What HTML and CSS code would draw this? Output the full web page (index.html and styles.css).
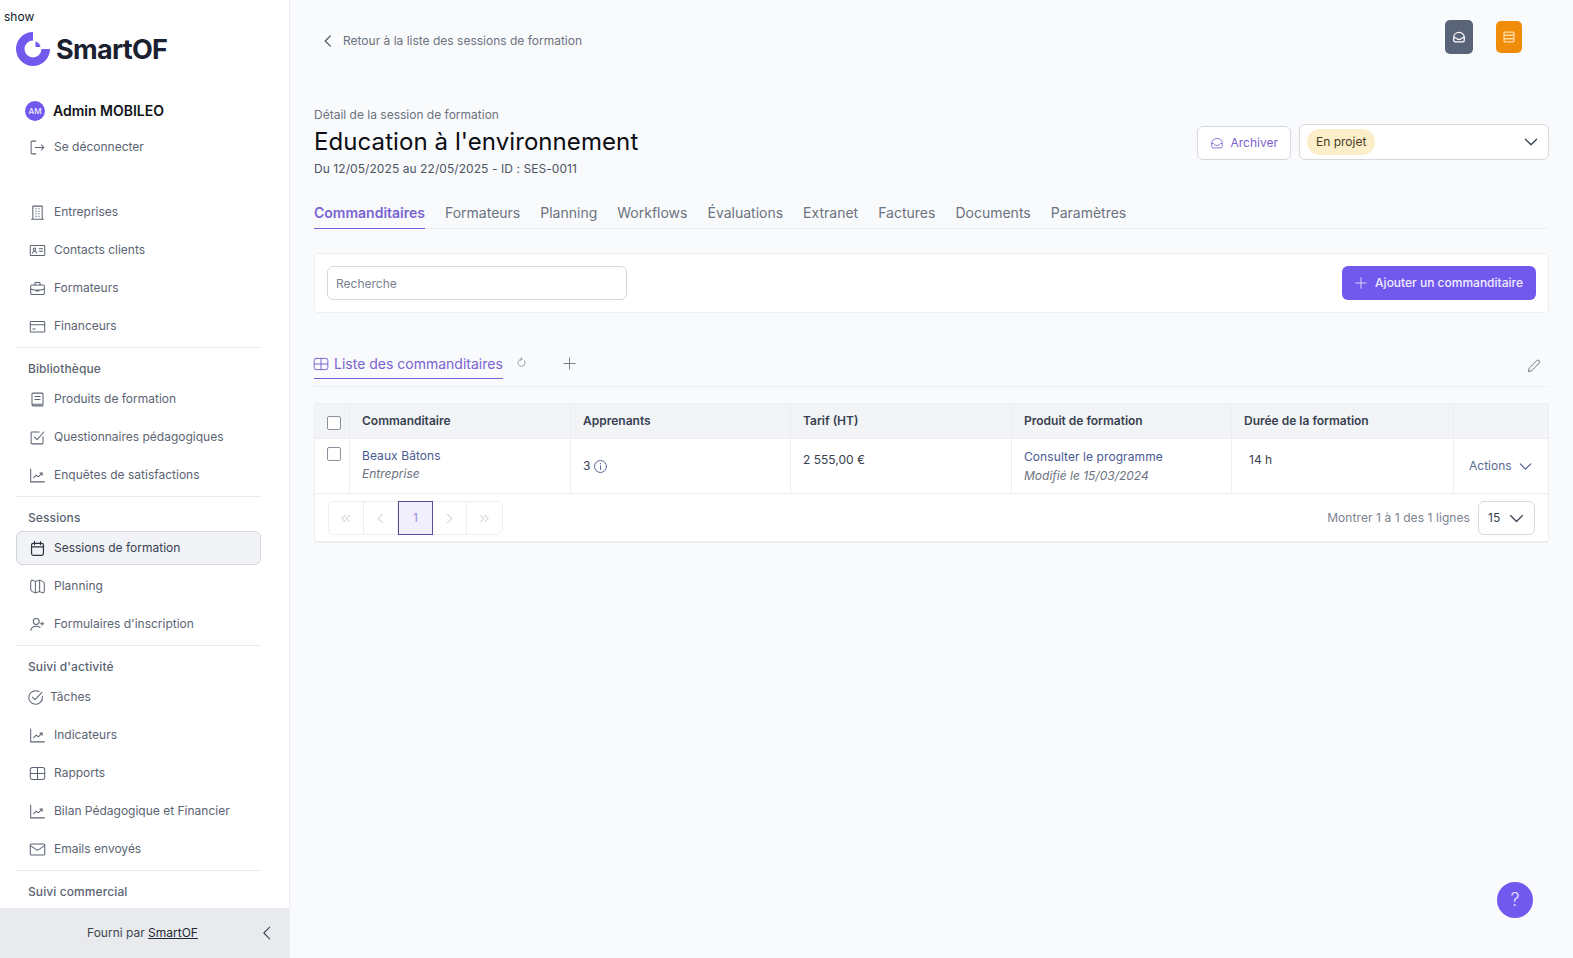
FILE: index.html
```html
<!DOCTYPE html>
<html lang="fr">
<head>
<meta charset="utf-8">
<title>Education à l'environnement</title>
<link rel="stylesheet" href="styles.css">
</head>
<body>
<svg class="sprite" aria-hidden="true">
  <symbol id="i-logout" viewBox="0 0 20 20"><path d="M8 2.500H3.500a1 1 0 0 0-1 1v13a1 1 0 0 0 1 1H8M7.500 10h10M14.500 7l3 3-3 3"/></symbol>
  <symbol id="i-building" viewBox="0 0 20 20"><path d="M4.500 18V2.500h11V18M3 18h14M8 5.500h.5M11.500 5.500h.5M8 8.500h.5M11.500 8.500h.5M8 11.500h.5M11.500 11.500h.5M8 14.500h.5M11.500 14.500h.5"/></symbol>
  <symbol id="i-id" viewBox="0 0 20 20"><rect x="1.500" y="4" width="17" height="12" rx="1"/><circle cx="6.500" cy="8.500" r="1.500"/><path d="M4 13c.5-1.500 1.500-2 2.500-2s2 .5 2.500 2M12 8h4M12 11h4"/></symbol>
  <symbol id="i-case" viewBox="0 0 20 20"><rect x="2" y="6" width="16" height="11" rx="1.500"/><path d="M7 6V4a1 1 0 0 1 1-1h4a1 1 0 0 1 1 1v2M2 10.500c5 2 11 2 16 0M8.500 11.500v1.500h3v-1.500"/></symbol>
  <symbol id="i-card" viewBox="0 0 20 20"><rect x="1.500" y="4" width="17" height="12.500" rx="1"/><path d="M1.500 8h17M4.500 13h3"/></symbol>
  <symbol id="i-book" viewBox="0 0 20 20"><path d="M3.500 15.500V3.500a1 1 0 0 1 1-1h11a1 1 0 0 1 1 1v12zM3.500 15.500a2 2 0 0 0 2 2h11M7 6.500h6M7 10h6"/></symbol>
  <symbol id="i-check-square" viewBox="0 0 20 20"><path d="M16.500 9v7.500a1 1 0 0 1-1 1h-12a1 1 0 0 1-1-1v-12a1 1 0 0 1 1-1H12M6.500 9.500l3 3 8-9"/></symbol>
  <symbol id="i-chart" viewBox="0 0 20 20"><path d="M2 2.500V17.500h16M5.500 12.500l3-3 2.500 2 4.500-4.500M12.800 7h2.700v2.700"/></symbol>
  <symbol id="i-calendar" viewBox="0 0 20 20"><rect x="3" y="4" width="14" height="14" rx="2"/><path d="M3 8h14M6.500 2v3.500M13.500 2v3.500"/></symbol>
  <symbol id="i-map" viewBox="0 0 20 20"><path d="M2 5c0-1.500 1-2.500 2-2.500L7.500 4l5-1.500L16 4c1 .5 2 1 2 2.500V15c0 1.500-1 2.500-2 2.500L12.500 16l-5 1.500L4 16c-1-.5-2-1-2-2.500zM7.500 4v13.500M12.500 2.500V16"/></symbol>
  <symbol id="i-user-plus" viewBox="0 0 20 20"><circle cx="8.500" cy="6.500" r="3.500"/><path d="M2 17c.5-3.500 3-5 6.500-5 2 0 3.500.5 4.500 1.500M15.500 7v4M13.500 9h4"/></symbol>
  <symbol id="i-check-circle" viewBox="0 0 20 20"><path d="M18 8.500A8 8 0 1 1 14 3M6.500 9.500l3 3 8-8.500"/></symbol>
  <symbol id="i-table" viewBox="0 0 20 20"><rect x="1.500" y="3" width="17" height="14" rx="2.500"/><path d="M1.500 10h17M10 3v14"/></symbol>
  <symbol id="i-mail" viewBox="0 0 20 20"><rect x="1.500" y="3.500" width="17" height="13" rx="1.200"/><path d="M1.500 5.500L10 11l8.500-5.500"/></symbol>
  <symbol id="i-inbox" viewBox="0 0 20 20"><path d="M2.500 10.500V15a2 2 0 0 0 2 2h11a2 2 0 0 0 2-2v-4.500c0-4-3-7-7.500-7s-7.500 3-7.500 7zM2.500 10.500c2.500 0 3.500.5 4.500 2l1.500 1h3l1.500-1c1-1.500 2-2 4.500-2"/></symbol>
  <symbol id="i-stack" viewBox="0 0 20 20"><rect x="3" y="3" width="14" height="14" rx="1"/><path d="M3 7.500h14M3 12.500h14"/></symbol>
  <symbol id="i-left" viewBox="0 0 20 20"><path d="M13 3.500L6.500 10l6.500 6.500"/></symbol>
  <symbol id="i-right" viewBox="0 0 20 20"><path d="M7 3.500l6.500 6.500L7 16.500"/></symbol>
  <symbol id="i-first" viewBox="0 0 20 20"><path d="M9.500 5l-5 5 5 5M16 5l-5 5 5 5"/></symbol>
  <symbol id="i-last" viewBox="0 0 20 20"><path d="M4 5l5 5-5 5M10.500 5l5 5-5 5"/></symbol>
  <symbol id="i-down" viewBox="0 0 20 20"><path d="M3 6.500l7 7 7-7"/></symbol>
  <symbol id="i-plus" viewBox="0 0 20 20"><path d="M10 2.500v15M2.500 10h15"/></symbol>
  <symbol id="i-pencil" viewBox="0 0 20 20"><path d="M13.500 3.200a2 2 0 0 1 3 3L7 16l-4 1 1-4z"/></symbol>
  <symbol id="i-refresh" viewBox="0 0 20 20"><path d="M15.500 7a6.500 6.500 0 1 1-5.500-3M9 1l2.500 3-3 2"/></symbol>
  <symbol id="i-info" viewBox="0 0 20 20"><circle cx="10" cy="10" r="8"/><path d="M10 9v5M10 6v.5"/></symbol>
</svg>

<div class="app">
  <aside class="sidebar">
    <div class="sidebar-top">
      <div class="show">show</div>
      <div class="logo">
        <svg class="logo-mark" viewBox="0 0 34 34"><path class="logo-fill" d="M17 0v8.500a8.500 8.500 0 1 0 8.500 8.500H34A17 17 0 1 1 17 0z"/><path class="logo-fill" d="M19.500 9.500a7 7 0 0 1 5 5.500h-5z"/></svg>
        <span class="logo-text">SmartOF</span>
      </div>
      <div class="user"><span class="avatar">AM</span><span class="user-name">Admin MOBILEO</span></div>
      <a class="nav-item logout"><svg class="ico"><use href="#i-logout"/></svg>Se déconnecter</a>
    </div>
    <nav class="nav">
      <a class="nav-item"><svg class="ico"><use href="#i-building"/></svg>Entreprises</a>
      <a class="nav-item"><svg class="ico"><use href="#i-id"/></svg>Contacts clients</a>
      <a class="nav-item"><svg class="ico"><use href="#i-case"/></svg>Formateurs</a>
      <a class="nav-item"><svg class="ico"><use href="#i-card"/></svg>Financeurs</a>
      <div class="nav-section">Bibliothèque</div>
      <a class="nav-item"><svg class="ico"><use href="#i-book"/></svg>Produits de formation</a>
      <a class="nav-item"><svg class="ico"><use href="#i-check-square"/></svg>Questionnaires pédagogiques</a>
      <a class="nav-item"><svg class="ico"><use href="#i-chart"/></svg>Enquêtes de satisfactions</a>
      <div class="nav-section">Sessions</div>
      <a class="nav-item active"><svg class="ico"><use href="#i-calendar"/></svg>Sessions de formation</a>
      <a class="nav-item"><svg class="ico"><use href="#i-map"/></svg>Planning</a>
      <a class="nav-item"><svg class="ico"><use href="#i-user-plus"/></svg>Formulaires d'inscription</a>
      <div class="nav-section">Suivi d'activité</div>
      <a class="nav-item tight"><svg class="ico"><use href="#i-check-circle"/></svg>Tâches</a>
      <a class="nav-item"><svg class="ico"><use href="#i-chart"/></svg>Indicateurs</a>
      <a class="nav-item"><svg class="ico"><use href="#i-table"/></svg>Rapports</a>
      <a class="nav-item"><svg class="ico"><use href="#i-chart"/></svg>Bilan Pédagogique et Financier</a>
      <a class="nav-item"><svg class="ico"><use href="#i-mail"/></svg>Emails envoyés</a>
      <div class="nav-section">Suivi commercial</div>
    </nav>
    <div class="side-foot">
      <span>Fourni par <a class="foot-link">SmartOF</a></span>
      <svg class="ico foot-chevron"><use href="#i-left"/></svg>
    </div>
  </aside>

  <main class="main">
    <div class="topbar">
      <a class="back"><svg class="ico back-ico"><use href="#i-left"/></svg>Retour à la liste des sessions de formation</a>
      <div class="top-actions">
        <span class="square slate"><svg class="ico"><use href="#i-inbox"/></svg></span>
        <span class="square orange"><svg class="ico"><use href="#i-stack"/></svg></span>
      </div>
    </div>

    <div class="head">
      <div>
        <div class="eyebrow">Détail de la session de formation</div>
        <h1 class="title">Education à l'environnement</h1>
        <div class="subtitle">Du 12/05/2025 au 22/05/2025 - ID : SES-0011</div>
      </div>
      <div class="head-actions">
        <button class="btn-archive"><svg class="ico"><use href="#i-inbox"/></svg>Archiver</button>
        <div class="status-select"><span class="badge">En projet</span><svg class="ico status-chevron"><use href="#i-down"/></svg></div>
      </div>
    </div>

    <div class="tabs">
      <a class="tab active">Commanditaires</a>
      <a class="tab">Formateurs</a>
      <a class="tab">Planning</a>
      <a class="tab">Workflows</a>
      <a class="tab">Évaluations</a>
      <a class="tab">Extranet</a>
      <a class="tab">Factures</a>
      <a class="tab">Documents</a>
      <a class="tab">Paramètres</a>
    </div>

    <div class="search-card">
      <div class="search-input">Recherche</div>
      <button class="btn-add"><svg class="ico"><use href="#i-plus"/></svg>Ajouter un commanditaire</button>
    </div>

    <div class="views">
      <a class="view active"><svg class="ico"><use href="#i-table"/></svg>Liste des commanditaires</a>
      <svg class="ico refresh"><use href="#i-refresh"/></svg>
      <svg class="ico add-view"><use href="#i-plus"/></svg>
      <svg class="ico edit-view"><use href="#i-pencil"/></svg>
    </div>

    <div class="table">
      <div class="row row-head">
        <div class="cell cell-check"><span class="checkbox"></span></div>
        <div class="cell">Commanditaire</div>
        <div class="cell">Apprenants</div>
        <div class="cell">Tarif (HT)</div>
        <div class="cell">Produit de formation</div>
        <div class="cell">Durée de la formation</div>
        <div class="cell"></div>
      </div>
      <div class="row row-body">
        <div class="cell cell-check"><span class="checkbox"></span></div>
        <div class="cell stack">
          <a class="link">Beaux Bâtons</a>
          <em class="muted">Entreprise</em>
        </div>
        <div class="cell low">3<svg class="ico info"><use href="#i-info"/></svg></div>
        <div class="cell mid">2 555,00 €</div>
        <div class="cell stack offset">
          <a class="link">Consulter le programme</a>
          <em class="muted">Modifié le 15/03/2024</em>
        </div>
        <div class="cell mid indent">14 h</div>
        <div class="cell low actions"><span>Actions</span><svg class="ico action-chevron"><use href="#i-down"/></svg></div>
      </div>
      <div class="table-foot">
        <div class="pager">
          <span class="page"><svg class="ico"><use href="#i-first"/></svg></span>
          <span class="page"><svg class="ico"><use href="#i-left"/></svg></span>
          <span class="page current">1</span>
          <span class="page"><svg class="ico"><use href="#i-right"/></svg></span>
          <span class="page"><svg class="ico"><use href="#i-last"/></svg></span>
        </div>
        <div class="page-info">
          <span>Montrer 1 à 1 des 1 lignes</span>
          <div class="page-size">15<svg class="ico"><use href="#i-down"/></svg></div>
        </div>
      </div>
    </div>
  </main>
</div>

<button class="help">?</button>
</body>
</html>
```
FILE: styles.css
```css
* { box-sizing: border-box; }

html, body { height: 100%; }

body {
  margin: 0;
  font-family: Inter, "Liberation Sans", sans-serif;
  font-size: 12px;
  line-height: 18px;
  color: #374151;
  background: #f9fafc;
  overflow: hidden;
}

.sprite { display: none; }

.ico {
  width: 16px;
  height: 16px;
  flex: none;
  fill: none;
  stroke: currentColor;
  stroke-width: 1.2;
  stroke-linecap: round;
  stroke-linejoin: round;
}

.app { display: flex; height: 958px; }

/* Sidebar */
.sidebar {
  width: 290px;
  flex: none;
  display: flex;
  flex-direction: column;
  background: #fff;
  border-right: 1px solid #eceef1;
}

.sidebar-top { padding: 8px 28px 0 0; }

.show { padding-left: 4px; color: #111827; }

.logo {
  display: flex;
  align-items: center;
  gap: 6px;
  height: 34px;
  margin: 6px 0 0 16px;
}

.logo-mark { width: 34px; height: 34px; }
.logo-fill { fill: #7259ee; }

.logo-text {
  padding-top: 2px;
  font-size: 27px;
  font-weight: 700;
  line-height: 34px;
  letter-spacing: -0.7px;
  color: #1a2030;
}

.user {
  display: flex;
  align-items: center;
  gap: 8px;
  height: 24px;
  margin: 33px 0 0 25px;
}

.avatar {
  width: 20px;
  height: 20px;
  border-radius: 50%;
  display: flex;
  align-items: center;
  justify-content: center;
  font-size: 8px;
  font-weight: 500;
  color: #f1eeff;
  background: #7259ee;
}

.user-name {
  font-size: 14px;
  font-weight: 600;
  color: #111318;
}

.nav-item {
  display: flex;
  align-items: center;
  gap: 8px;
  height: 34px;
  margin-left: 16px;
  padding-left: 12px;
  border: 1px solid transparent;
  border-radius: 6px;
  color: #5b6472;
}

.nav-item .ico { width: 17px; height: 17px; }

.logout { margin-top: 7px; }

.nav {
  flex: 1;
  min-height: 0;
  overflow: hidden;
  margin-top: 31px;
  padding-right: 28px;
  display: flex;
  flex-direction: column;
  gap: 4px;
}

.nav-item.active {
  background: #f1f3f6;
  border-color: #d3d6dc;
  color: #374151;
}

.nav-item.active .ico { color: #2b3240; stroke-width: 1.4; }

.nav-item.tight { padding-left: 10px; gap: 6px; }

.nav-section {
  flex: none;
  margin-left: 16px;
  padding: 12px 0 0 12px;
  height: 31px;
  border-top: 1px solid #e8eaed;
  font-weight: 500;
  color: #5b6472;
  letter-spacing: 0.1px;
}

.side-foot {
  flex: none;
  position: relative;
  height: 50px;
  display: flex;
  align-items: center;
  justify-content: center;
  padding-right: 4px;
  background: #e8eaed;
  color: #3f4753;
}

.foot-link { color: #1f2937; text-decoration: underline; }

.foot-chevron {
  position: absolute;
  right: 13px;
  top: 16px;
  width: 18px;
  height: 18px;
}

/* Main */
.main {
  flex: 1;
  min-width: 0;
  padding: 20px 24px 0 24px;
}

.topbar {
  display: flex;
  justify-content: space-between;
  height: 34px;
}

.back {
  display: flex;
  align-items: center;
  gap: 7px;
  height: 18px;
  margin: 12px 0 0 6px;
  color: #6b7280;
}

.back-ico { color: #4b5563; stroke-width: 1.5; }

.top-actions {
  display: flex;
  align-items: center;
  gap: 23px;
  padding-right: 27px;
}

.square {
  display: flex;
  align-items: center;
  justify-content: center;
  border-radius: 5px;
  color: #fff;
}

.square .ico { width: 14px; height: 14px; stroke-width: 1.8; }

.slate { width: 28px; height: 34px; background: #5a6479; }
.orange { width: 26px; height: 32px; background: #f08c0a; color: #fcdca0; }

.head {
  display: flex;
  justify-content: space-between;
  align-items: flex-end;
  margin-top: 52px;
}

.eyebrow { color: #6b7280; }

.title {
  margin: 0;
  font-size: 24px;
  font-weight: 400;
  line-height: 36px;
  letter-spacing: 0.08px;
  color: #0b0d12;
}

.subtitle { color: #4b5563; letter-spacing: 0.07px; }

.head-actions {
  display: flex;
  align-items: flex-end;
  gap: 8px;
  margin-bottom: 18px;
}

.btn-archive {
  display: flex;
  align-items: center;
  gap: 7px;
  height: 34px;
  padding: 0 12px;
  font: inherit;
  color: #7a63d1;
  background: #fff;
  border: 1px solid #d5d8dd;
  border-radius: 6px;
}

.btn-archive .ico { width: 14px; height: 14px; }

.status-select {
  display: flex;
  align-items: center;
  justify-content: space-between;
  width: 250px;
  height: 36px;
  padding: 0 9px 0 7px;
  background: #fff;
  border: 1px solid #d5d8dd;
  border-radius: 6px;
}

.badge {
  padding: 4px 9px;
  border-radius: 13px;
  background: #fbeec9;
  color: #473a1f;
}

.status-chevron { color: #374151; stroke-width: 1.6; }

.tabs {
  display: flex;
  gap: 20px;
  margin-top: 24px;
  border-bottom: 1px solid #eceef1;
}

.tab {
  height: 27px;
  line-height: 22px;
  font-size: 14px;
  color: #6b7280;
  margin-bottom: -1px;
  border-bottom: 1px solid transparent;
}

.tab.active {
  font-weight: 600;
  color: #7a63d1;
  border-bottom-color: #7a63d1;
}

.search-card {
  display: flex;
  justify-content: space-between;
  height: 60px;
  margin-top: 24px;
  padding: 12px;
  background: #fff;
  border: 1px solid #eceef1;
  border-radius: 4px;
}

.search-input {
  width: 300px;
  height: 34px;
  padding: 0 8px;
  line-height: 34px;
  color: #7b8290;
  border: 1px solid #d5d8dd;
  border-radius: 6px;
}

.btn-add {
  display: flex;
  align-items: center;
  gap: 7px;
  height: 34px;
  padding: 0 13px 0 12px;
  font: inherit;
  font-weight: 500;
  color: #f1eeff;
  background: #7259ee;
  border: 0;
  border-radius: 6px;
}

.btn-add .ico { width: 14px; height: 14px; }

.views {
  display: flex;
  align-items: flex-start;
  height: 35px;
  margin-top: 39px;
  border-bottom: 1px solid #eceef1;
}

.view {
  display: flex;
  align-items: center;
  gap: 5px;
  height: 27px;
  padding-bottom: 3px;
  font-size: 14px;
  color: #7a63d1;
  border-bottom: 1px solid #7a63d1;
}

.view .ico { margin-left: -1px; }

.refresh {
  width: 11px;
  height: 11px;
  margin: 5px 0 0 13px;
  color: #6b7280;
}

.add-view {
  width: 15px;
  height: 15px;
  margin: 4px 0 0 35px;
  color: #6b7280;
}

.edit-view {
  width: 16px;
  height: 16px;
  margin: 6px 7px 0 auto;
  color: #6b7280;
}

.table {
  margin-top: 16px;
  background: #fff;
  border: 1px solid #eceef1;
  border-bottom-width: 2px;
  border-radius: 3px;
}

.row {
  display: grid;
  grid-template-columns: 35px 221px 220px 221px 220px 222px 1fr;
}

.row-head {
  height: 34px;
  background: #f3f4f6;
  font-weight: 600;
  color: #374151;
}

.row-body {
  height: 56px;
  border-top: 1px solid #eceef1;
  border-bottom: 1px solid #eceef1;
}

.cell {
  padding: 8px 12px;
  border-right: 1px solid #eceef1;
}

.cell:last-child { border-right: 0; }

.row .cell-check { padding: 12px 0 0 12px; }
.row-body .cell-check { padding-top: 8px; }

.checkbox {
  display: block;
  width: 14px;
  height: 14px;
  background: #fff;
  border: 1px solid #8b919c;
  border-radius: 2px;
}

.stack {
  display: flex;
  flex-direction: column;
  padding-top: 8px;
}

.offset { padding-top: 9px; }
.offset em { margin-top: 1px; }

.link { color: #4a5a92; letter-spacing: 0.08px; }
.muted { color: #6b7280; }

.low { padding-top: 18px; display: flex; align-items: flex-start; }
.mid { padding-top: 12px; }
.indent { padding-left: 17px; }

.info {
  width: 15px;
  height: 15px;
  margin: 2px 0 0 3px;
  color: #4a5a92;
}

.actions {
  padding-left: 15px;
  color: #5a6a92;
  gap: 6px;
}

.action-chevron {
  width: 15px;
  height: 15px;
  margin-top: 2px;
  color: #4a5a92;
  stroke-width: 1.6;
}

.table-foot {
  display: flex;
  justify-content: space-between;
  align-items: flex-start;
  height: 47px;
  padding: 7px 13px 0 13px;
}

.pager {
  display: flex;
  height: 34px;
  border: 1px solid #eceef1;
  border-radius: 6px;
}

.page {
  width: 34.600px;
  display: flex;
  align-items: center;
  justify-content: center;
  color: #a6abb4;
  border-right: 1px solid #eceef1;
}

.page:last-child { border-right: 0; }
.page .ico { width: 13px; height: 13px; }

.page.current {
  margin: -1px 0;
  color: #9c8fd8;
  background: #f1effc;
  border: 1px solid #5b4a9a;
}

.page-info {
  display: flex;
  align-items: center;
  gap: 8px;
  letter-spacing: 0.08px;
  color: #7b8290;
}

.page-size {
  display: flex;
  align-items: center;
  justify-content: space-between;
  width: 57px;
  height: 34px;
  padding: 0 9px;
  color: #374151;
  border: 1px solid #d5d8dd;
  border-radius: 6px;
}

.page-size .ico { width: 17px; height: 17px; stroke-width: 1.4; }

.help {
  position: fixed;
  left: 1497px;
  top: 882px;
  width: 36px;
  height: 36px;
  padding: 0;
  border: 0;
  border-radius: 50%;
  font: inherit;
  font-size: 18px;
  font-weight: 300;
  color: #e9e4ff;
  background: #7259ee;
}
```
